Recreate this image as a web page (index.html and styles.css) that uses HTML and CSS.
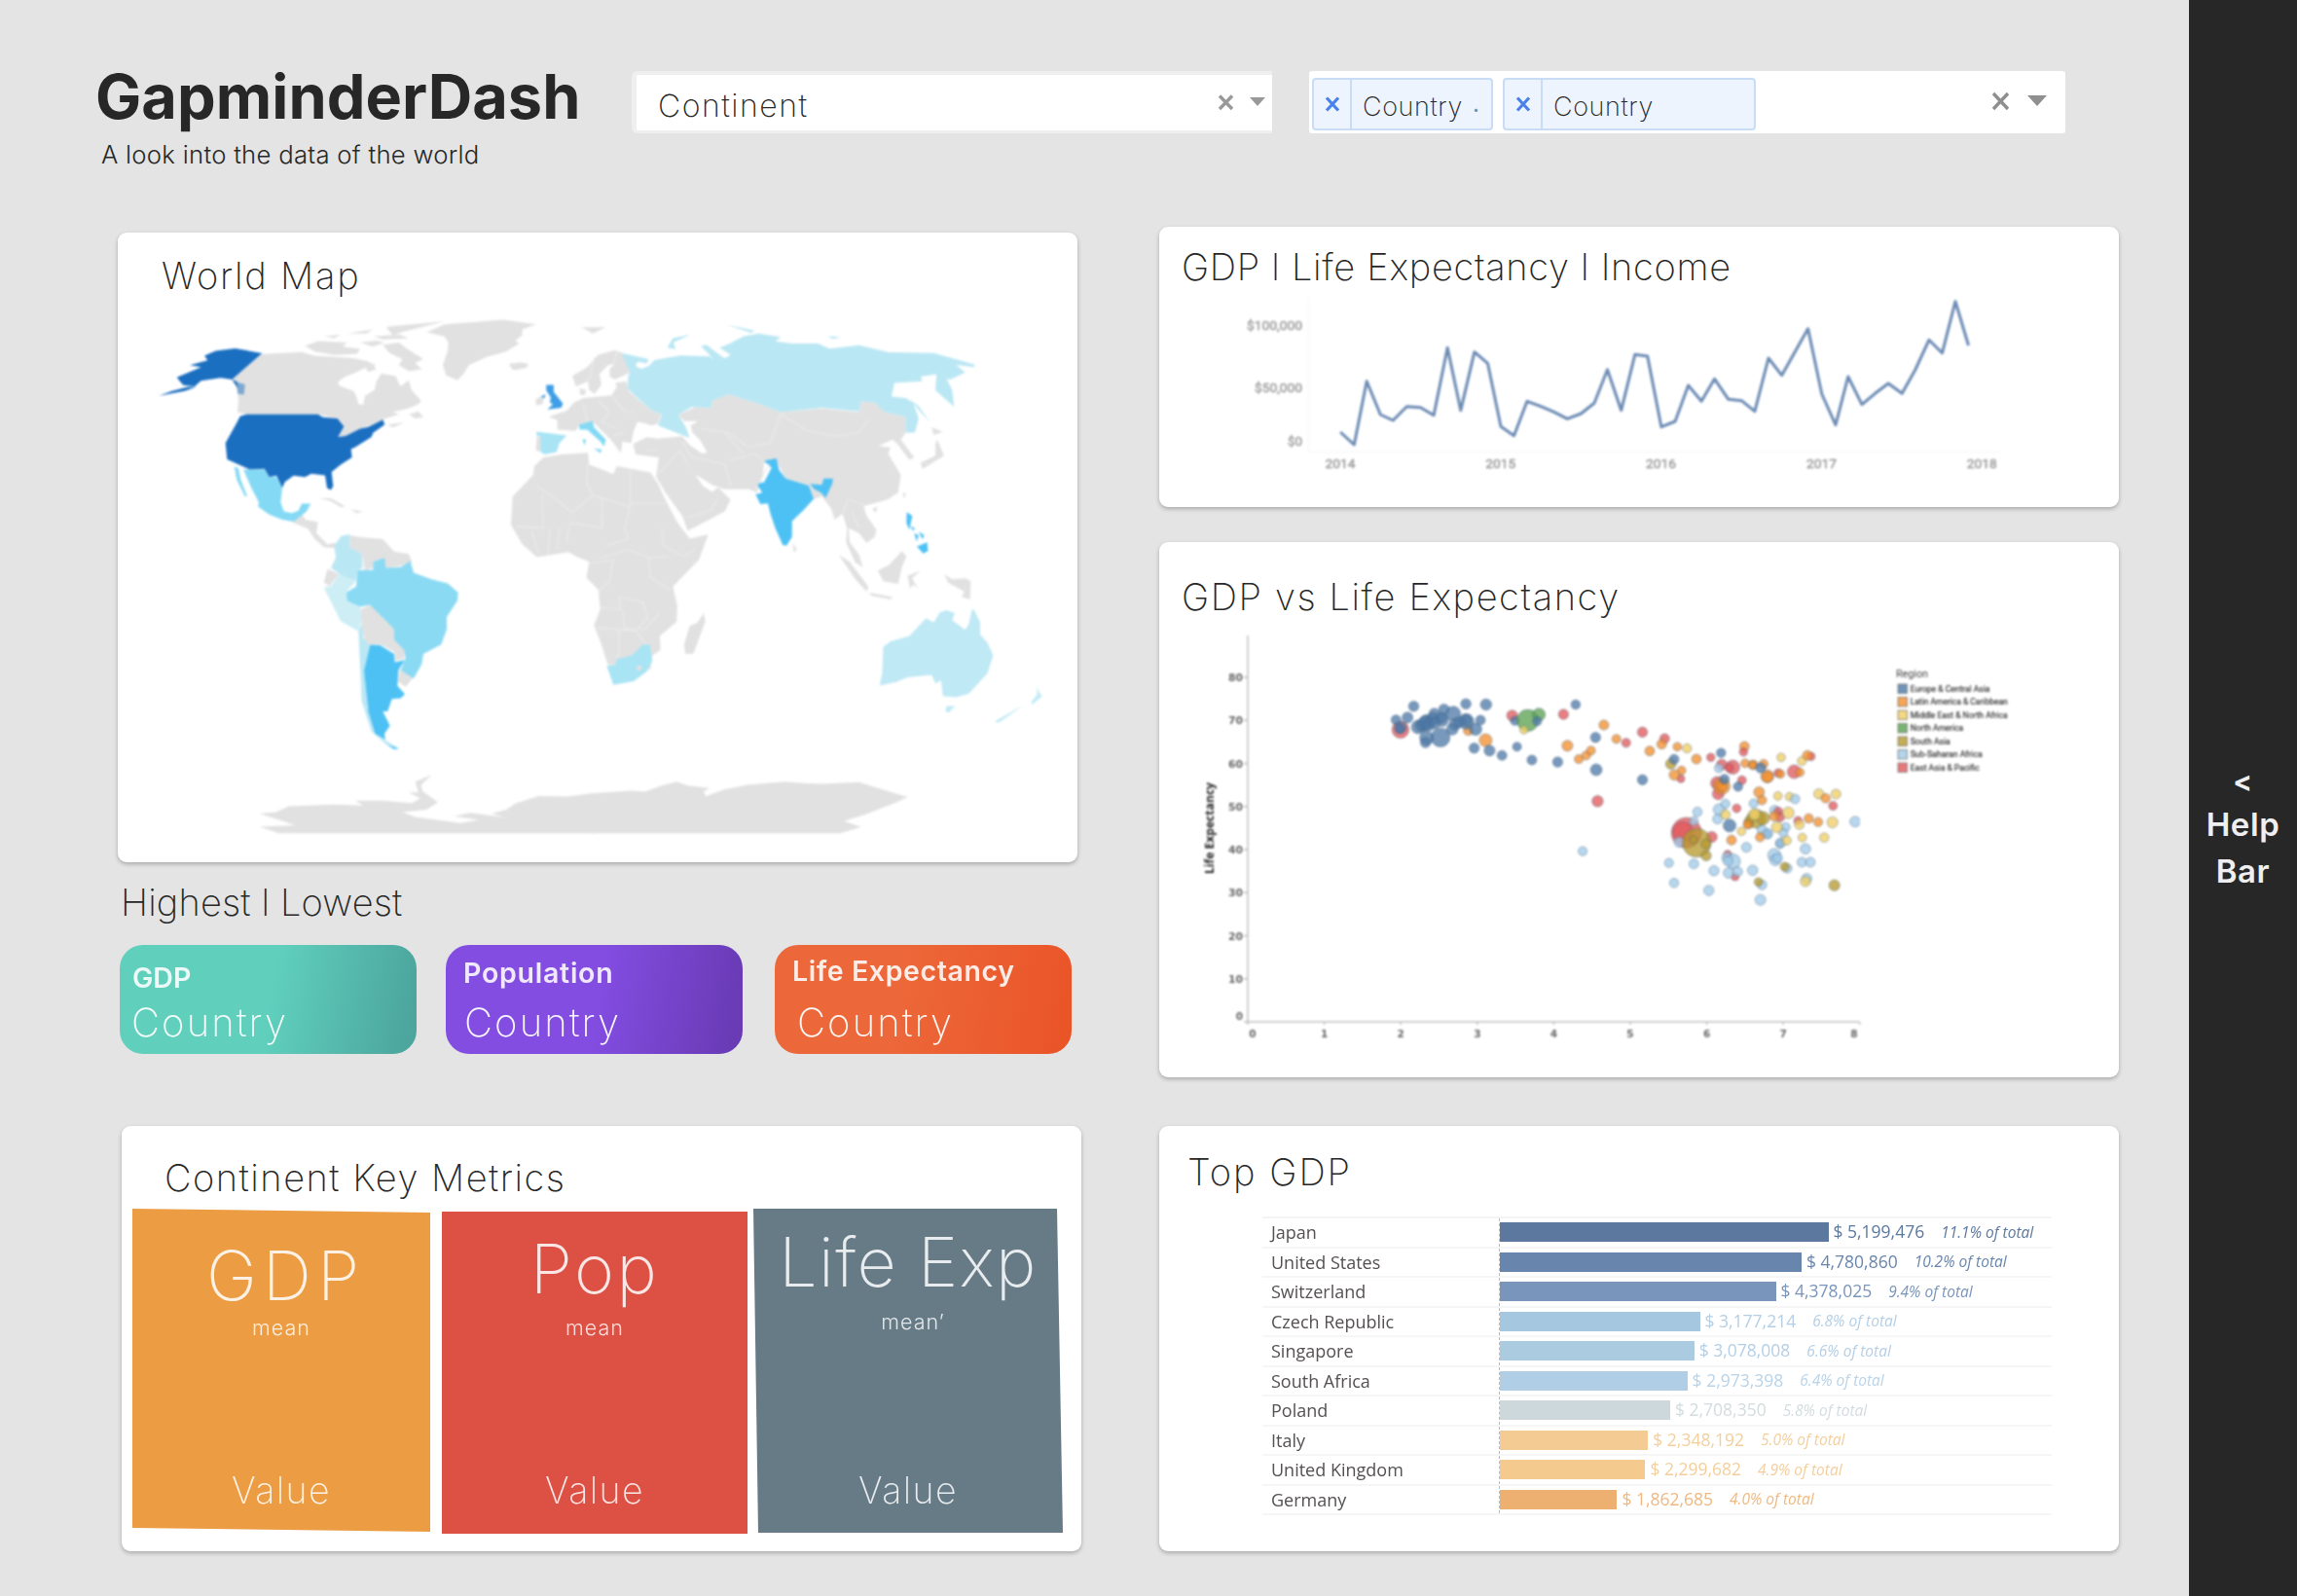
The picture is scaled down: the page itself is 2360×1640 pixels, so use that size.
FILE: index.html
```html
<!DOCTYPE html>
<html lang="en">
<head>
<meta charset="utf-8">
<title>GapminderDash</title>
<link rel="stylesheet" href="styles.css">
</head>
<body>
<div class="app">
<main class="main">
  <header class="header">
    <div class="brand">
      <h1 class="brand-name">GapminderDash</h1>
      <p class="brand-sub">A look into the data of the world</p>
    </div>
    <div class="select select-one">
      <span class="select-value">Continent</span>
      <svg class="controls-one" width="52" height="20" viewBox="0 0 52 20"><path d="M4 3.500 17 17M17 3.500 4 17" stroke="#999" stroke-width="3.400"/><path d="M35 5h16l-8 9z" fill="#999"/></svg>
    </div>
    <div class="select select-multi">
      <div class="tag tag-a"><span class="tag-x"><svg width="16" height="16" viewBox="0 0 16 16"><path d="M2 1.500 14 14.500M14 1.500 2 14.500" stroke="#4a80ea" stroke-width="3.200"/></svg></span><span class="tag-label">Country</span><span class="tag-dot">.</span></div>
      <div class="tag tag-b"><span class="tag-x"><svg width="16" height="16" viewBox="0 0 16 16"><path d="M2 1.500 14 14.500M14 1.500 2 14.500" stroke="#4a80ea" stroke-width="3.200"/></svg></span><span class="tag-label">Country</span></div>
      <svg class="controls-multi" width="60" height="22" viewBox="0 0 60 22"><path d="M2 3 17 19M17 3 2 19" stroke="#8f8f8f" stroke-width="3.400"/><path d="M37 5h20L47 16z" fill="#8f8f8f"/></svg>
    </div>
  </header>

  <div class="columns">
    <div class="col col-left">
      <section class="card card-map">
        <h2 class="title t-map">World Map</h2>
        <svg class="map" viewBox="121 310 986 576" width="986" height="576">
          <g class="land" transform="translate(110 230) scale(.33333 .42092)">
            <path d="M478 318 560 315 600 313 640 322 700 325 760 328 800 335 830 345 800 350 770 362 730 375 712 386 715 395 760 408 768 420 775 440 790 442 795 420 825 405 830 385 845 365 890 372 897 385 905 397 930 382 938 405 968 432 960 440 930 450 880 460 900 465 870 472 850 478 815 490 780 500 735 518 712 520 728 495 710 475 650 465 430 465 402 460 405 430 400 400 385 380z"/>
            <path d="M610 298 650 286 740 290 725 300 780 305 770 318 700 320 640 312zM670 275 720 270 700 280zM740 268 820 258 800 268zM780 290 830 285 855 290 820 300zM850 295 900 290 925 305 975 330 950 340 970 355 930 360 900 345 910 330 870 315zM860 252 900 248 1040 238 980 250 920 262 880 272zM820 275 900 270 930 280 850 282zM795 350 820 345 830 355 805 362zM930 465 960 458 975 472 950 475zM865 490 915 485 880 498z"/>
            <path d="M985 265 1040 245 1130 240 1220 234 1322 245 1280 258 1280 272 1258 285 1270 292 1230 312 1170 325 1115 345 1100 365 1080 382 1045 370 1035 345 1050 310 1052 290 1040 275zM1240 343 1270 338 1298 342 1290 352 1250 357z"/>
            <path d="M570 728 600 708 612 722 650 728 645 755 680 783 700 778 708 792 670 790 640 770 620 745zM655 670 690 670 735 690 720 692 690 677zM750 697 790 702 770 707z"/>
            <path d="M748 760 780 765 850 770 885 800 930 806 940 825 905 835 862 840 852 815 820 825 820 840 795 847 785 805 748 790zM680 842 715 855 685 885 668 875z"/>
            <path d="M782 940 812 930 858 963 887 990 890 1015 918 1040 915 1062 890 1067 885 1045 840 1026 800 1030 785 990zM902 1088 943 1108 920 1130 897 1118z"/>
            <path class="flat" d="M470 1440 520 1436 560 1422 700 1418 790 1420 765 1408 850 1408 940 1414 965 1402 930 1388 960 1388 950 1362 1000 1345 968 1370 972 1385 1020 1412 985 1430 910 1436 950 1448 1090 1463 1145 1455 1070 1446 1120 1438 1230 1450 1185 1440 1230 1430 1260 1415 1330 1397 1420 1398 1500 1390 1500 1488 530 1488 470 1472 580 1468 530 1455z"/>
            <path class="us" d="M478 316 395 304 335 310 300 322 310 333 255 345 290 350 215 375 225 385 235 394 270 397 290 383 350 376 385 380zM160 420 200 408 250 398 275 398 240 408zM385 380 400 385 404 402z"/>
            <path class="us soft" d="M398 386 425 392 422 417 403 415z"/>
            <path class="us" d="M430 465 650 465 665 472 710 475 730 495 712 520 735 518 780 500 805 496 850 478 856 490 820 510 815 520 765 545 752 550 755 570 720 588 692 606 697 640 690 650 678 645 672 614 630 610 610 618 575 615 548 630 540 645 522 615 500 618 485 598 440 600 370 575 365 535 400 485 410 470z"/>
            <path class="mx" d="M420 600 485 600 500 618 522 618 540 645 535 680 545 702 570 706 590 700 600 683 628 683 615 702 575 727 540 722 500 710 465 690 468 680 445 645zM392 592 405 597 412 625 432 665 425 665 400 625z"/>
            <path class="c2" d="M700 785 722 762 748 758 748 790 785 805 788 840 772 845 768 870 735 865 690 840 705 815z"/>
            <path class="c1" d="M715 855 768 872 740 895 745 920 780 935 785 965 775 995 720 970 668 888 690 885z"/>
            <path class="br" d="M772 845 820 845 820 825 855 815 860 840 905 838 935 823 945 852 1000 868 1050 878 1082 900 1080 920 1047 960 1047 990 1030 1027 975 1050 970 1075 945 1110 905 1090 920 1060 915 1040 885 1015 885 990 855 965 810 930 780 935 740 920 738 900 768 885z"/>
            <path class="c2" d="M775 995 785 975 790 1010 808 1030 793 1085 802 1180 822 1245 860 1262 900 1280 870 1277 815 1240 785 1165z"/>
            <path class="c4" d="M810 1028 840 1028 885 1050 887 1070 918 1065 898 1090 895 1128 918 1148 905 1158 878 1160 865 1190 850 1190 872 1225 855 1245 858 1260 825 1245 805 1190 792 1090zM865 1273 900 1281 885 1283z"/>
          </g>
          <g class="land" transform="translate(500 310) scale(.38265 .36352)">
            <path class="flat" d="M280 1390 390 1382 425 1385 470 1368 510 1357 540 1368 598 1375 583 1385 588 1398 640 1378 700 1366 800 1357 850 1361 900 1363 1000 1358 1050 1375 1130 1400 1100 1415 1020 1448 960 1468 1005 1485 950 1503 280 1503z"/>
            <path d="M135 382 148 382 145 425 132 420zM255 72 320 72 285 90zM60 175 105 173 112 182 78 193zM132 275 155 265 150 290 132 293z"/>
            <path d="M166 325 215 308 235 285 260 272 335 265 350 240 345 230 375 225 380 250 405 275 440 305 468 320 460 345 440 350 430 345 405 340 395 365 388 400 365 395 360 428 335 392 285 340 247 348 240 365 190 362 190 335zM230 210 270 185 300 150 345 137 365 145 385 200 345 220 330 212 330 190 345 175 325 180 303 205 308 235 290 260 275 250 272 225 240 240zM250 245 268 250 262 265 250 262z"/>
            <path d="M515 320 560 298 605 300 605 280 650 262 735 290 790 312 900 302 1000 312 1005 282 1040 285 1070 312 1125 325 1125 370 1112 390 1148 440 1135 447 1105 405 1090 390 1052 408 1085 412 1078 430 1112 490 1105 540 1075 560 1040 570 1012 578 1020 605 1047 645 1042 665 1020 682 1000 655 972 640 975 680 1000 715 1010 750 990 738 965 680 968 640 955 600 935 617 925 585 900 550 875 560 865 520 803 500 780 455 745 455 740 500 725 540 705 530 640 530 605 518 560 488 580 520 605 538 622 525 655 560 640 592 600 615 540 648 525 605 480 540 455 495 462 440 400 432 393 402 430 383 460 387 525 380 545 405 580 430 592 425 572 390 552 370 548 350 568 338 530 338z"/>
            <path d="M152 440 200 432 272 427 275 460 340 487 350 465 440 483 460 515 480 560 510 620 545 670 595 658 570 730 500 805 512 860 510 905 465 945 467 985 445 1000 440 1040 345 1030 325 1025 305 960 288 915 305 870 300 815 268 780 275 735 240 720 220 708 135 722 95 685 65 630 70 550 125 490 128 465z"/>
            <path d="M583 880 587 905 555 995 533 995 530 970 545 917 565 908zM822 682 833 700 825 710zM1195 355 1225 368 1200 377zM1210 390 1228 435 1190 460 1170 473 1165 455 1205 435 1205 400zM1117 540 1126 542 1120 558zM1035 585 1050 580 1045 597zM1050 760 1080 745 1115 705 1127 720 1115 750 1105 798 1065 790zM945 715 975 735 1025 805 1020 820 990 785zM1025 822 1090 835 1085 842 1035 832zM1130 775 1165 760 1142 782 1158 810 1145 800 1137 812zM1228 770 1250 785 1285 782 1300 790 1298 842 1275 835 1283 820 1240 795z"/>
            <path class="uk" d="M160 235 180 235 180 255 205 288 200 300 163 305 178 290 170 285 172 270 160 250zM145 268 158 262 155 273z"/>
            <path class="c3" d="M135 367 215 378 195 400 188 425 155 432 145 425 145 382 133 378z"/>
            <path class="mx" d="M247 348 285 337 288 355 320 390 315 410 305 395 270 362 250 362zM288 415 310 418 305 428zM257 388 267 390 263 407z"/>
            <path class="c2" d="M362 145 435 162 430 175 405 170 400 182 415 190 435 182 450 165 520 152 600 155 612 165 575 125 590 122 625 150 640 160 655 150 625 130 650 120 690 98 730 90 790 100 775 112 820 118 890 118 920 133 1000 123 1080 143 1200 145 1312 178 1308 185 1260 178 1285 200 1245 220 1235 218 1250 250 1255 297 1205 250 1208 205 1165 212 1170 225 1095 230 1087 268 1125 272 1145 285 1160 330 1150 370 1125 370 1125 325 1070 312 1040 285 1005 282 1000 310 900 300 790 312 735 290 650 262 605 280 605 300 550 298 515 320 535 355 545 385 460 350 470 320 440 305 405 272 378 245 380 210 385 200zM485 130 500 103 548 93 502 115 507 135zM645 65 720 82 710 88zM915 98 950 100 930 106zM1140 280 1160 295 1190 340 1165 312z"/>
            <path class="c4" d="M745 450 778 443 785 475 803 500 865 520 878 558 850 590 820 620 820 665 805 690 795 688 775 640 762 600 755 570 735 572 722 545 740 540 725 515 745 510 765 470zM868 515 900 518 905 500 930 500 928 515 910 555 898 540 880 530zM1128 595 1143 605 1135 645 1127 625zM1138 635 1150 640 1145 648zM1148 655 1160 660 1155 678zM1160 650 1175 660 1170 672zM1155 692 1183 680 1185 705 1172 712z"/>
            <path class="c3" d="M322 1028 345 1028 350 1010 390 1000 420 968 438 970 445 1015 430 1045 395 1073 340 1083z"/>
            <path d="M400 1035 410 1026 419 1034 408 1045z"/>
            <path class="au" d="M1065 975 1085 960 1135 945 1180 895 1200 907 1217 878 1235 872 1257 880 1250 900 1285 928 1295 910 1303 870 1308 870 1325 905 1325 940 1345 965 1360 1000 1345 1050 1295 1108 1260 1118 1225 1115 1220 1070 1205 1080 1195 1055 1130 1062 1100 1075 1055 1085 1062 1050zM1235 1143 1258 1143 1240 1162 1232 1158zM1478 1088 1485 1108 1492 1115 1465 1138 1462 1132 1478 1112zM1442 1140 1375 1190 1363 1187z"/>
            <path class="borders" d="M135 520 230 595 285 548 385 580M272 460 268 510 285 548M385 475 385 580 370 640 380 670 320 690M150 545 152 640 80 635M310 555 310 640 225 625 215 680M385 570 480 570M470 640 475 690 530 720 560 700M305 725 380 700 440 725 490 720M275 740 340 730 330 790 300 820M435 725 440 780 495 815M305 865 360 870 355 835 420 850 435 900M365 870 370 925 425 925 465 880M295 922 400 930 430 895M355 930 355 990 350 1010M400 930 430 970M463 485 520 420 545 470M540 610 600 590 620 560M525 395 550 440 640 460 655 520M650 450 720 430 745 450M575 360 650 370 700 410 760 400 790 318 860 365 940 380 1000 370 1030 330M640 370 690 430M720 530 760 460M955 600 970 560 1015 575M980 590 1000 640M260 290 270 340M300 280 330 310 310 340 350 360M335 265 370 310 400 310M430 420 460 420M340 380 370 370M120 650 140 710M170 640 165 715M195 640 190 700M290 155 275 220M350 140 340 180"/>
          </g>
        </svg>
      </section>

      <h2 class="title t-high">Highest l Lowest</h2>
      <div class="tiles">
        <div class="tile tile-gdp"><span class="tile-name">GDP</span><span class="tile-country">Country</span></div>
        <div class="tile tile-pop"><span class="tile-name">Population</span><span class="tile-country">Country</span></div>
        <div class="tile tile-life"><span class="tile-name">Life Expectancy</span><span class="tile-country">Country</span></div>
      </div>

      <section class="card card-metrics">
        <h2 class="title t-metrics">Continent Key Metrics</h2>
        <div class="metrics">
          <div class="metric m-gdp"><span class="m-name">GDP</span><span class="m-mean">mean</span><span class="m-value">Value</span></div>
          <div class="metric m-pop"><span class="m-name">Pop</span><span class="m-mean">mean</span><span class="m-value">Value</span></div>
          <div class="metric m-life"><span class="m-name">Life Exp</span><span class="m-mean">mean’</span><span class="m-value">Value</span></div>
        </div>
      </section>
    </div>

    <div class="col col-right">
      <section class="card card-line">
        <h2 class="title t-line">GDP l Life Expectancy l Income</h2>
        <svg class="chart" id="line" viewBox="1191 300 986 221" width="986" height="221"></svg>
      </section>
      <section class="card card-scatter">
        <h2 class="title t-scatter">GDP vs Life Expectancy</h2>
        <svg class="chart" id="scatter" viewBox="1191 640 986 467" width="986" height="467"></svg>
      </section>
      <section class="card card-top">
        <h2 class="title t-top">Top GDP</h2>
        <div class="bars" id="bars"></div>
      </section>
    </div>
  </div>
</main>
<aside class="help"><span class="help-arrow">&lt;</span><span>Help</span><span>Bar</span></aside>
</div>
<script src="script.js"></script>
</body>
</html>
```
FILE: styles.css
```css
* { box-sizing: border-box; margin: 0; padding: 0; }
body { font-family: Inter, "Liberation Sans", sans-serif; color: #272727; background: #e4e4e4; }
.app { display: flex; width: 2360px; height: 1640px; overflow: hidden; }
.main { width: 2249px; background: #e4e4e4; }
.help { width: 111px; background: #272727; color: #efeff1; display: flex; flex-direction: column; align-items: center; padding-top: 782px; font-size: 33px; font-weight: 600; line-height: 48px; letter-spacing: .6px; }
.help-arrow { font-size: 29px; font-weight: 700; line-height: 41px; }

.header { display: flex; height: 233px; padding: 73px 0 0 98px; align-items: flex-start; }
.brand { width: 551px; }
.brand-name { font-size: 63px; line-height: 63px; font-weight: 700; letter-spacing: .05px; margin-top: -5px; white-space: nowrap; }
.brand-sub { font-size: 25.7px; line-height: 26px; font-weight: 300; letter-spacing: .28px; margin: 15px 0 0 6px; white-space: nowrap; }
.select { display: flex; align-items: center; background: #fff; }
.select-one { width: 658px; height: 64px; border: solid #efefef; border-width: 4px 0 3px 5px; border-radius: 6px 0 0 6px; padding: 7px 6px 0 22px; justify-content: space-between; }
.select-value { font-size: 32px; line-height: 32px; font-weight: 250; letter-spacing: 1.500px; }
.controls-one { margin-top: -9px; }
.select-multi { width: 777px; height: 64px; margin-left: 38px; border-radius: 3px; padding: 0 16px 0 3px; gap: 10px; }
.tag { display: flex; height: 54px; border: 2px solid #c9dcf5; border-radius: 4px; background: #edf4fe; margin-top: 3px; }
.tag-x { display: flex; width: 39px; border-right: 2px solid #c9dcf5; align-items: center; justify-content: center; }
.tag-label { font-size: 27px; line-height: 27px; font-weight: 250; letter-spacing: .6px; margin: 14px 0 0 11px; }
.tag-dot { font-size: 24px; line-height: 27px; margin: 11px 0 0 10px; color: #6a90b8; }
.tag-a { width: 186px; }
.tag-b { width: 260px; }
.controls-multi { margin: -2px 0 0 auto; }

.columns { display: flex; }
.col { display: flex; flex-direction: column; }
.col-left { padding: 6px 0 0 121px; width: 1191px; }
.card { width: 986px; background: #fff; border-radius: 9px; box-shadow: 0 2px 4px rgba(0,0,0,.26); overflow: hidden; }
.title { font-size: 38px; line-height: 38px; font-weight: 230; white-space: nowrap; }
.chart, .map { display: block; }

.card-map { height: 647px; }
.t-map { height: 71px; padding: 25px 0 0 45px; letter-spacing: 1.800px; }
.map { filter: blur(.9px); }
.land path { fill: #e1e1e1; }
.land .us { fill: #1b6fc1; }
.land .soft { opacity: .5; }
.land .mx { fill: #84d9f4; }
.land .br { fill: #8bdaf3; }
.land .c1 { fill: #cdeef5; }
.land .c2 { fill: #bae7f4; }
.land .c3 { fill: #a8e4f4; }
.land .c4 { fill: #4ec1f4; }
.land .uk { fill: #3f9ee6; }
.land .au { fill: #bfe9f5; }
.land .borders { fill: none; stroke: #ececec; stroke-width: 3; }

.t-high { margin: 22px 0 0 3px; height: 63px; letter-spacing: .15px; }
.tiles { display: flex; padding-left: 2px; }
.tile { width: 305px; height: 112px; border-radius: 24px; color: #fff; display: flex; flex-direction: column; }
.tile-name { font-size: 28.500px; line-height: 29px; font-weight: 600; opacity: .88; white-space: nowrap; }
.tile-country { font-size: 40px; line-height: 40px; font-weight: 200; opacity: .95; letter-spacing: 2.100px; }
.tile-gdp { background: linear-gradient(100deg, #60d0bd 50%, #4ca69e 96%); padding: 19px 0 0 13px; }
.tile-gdp .tile-country { margin: 12px 0 0 -1px; }
.tile-pop { margin: 0 33px 0 30px; background: linear-gradient(100deg, #834de2 50%, #693bb5 96%); padding: 14px 0 0 18px; }
.tile-pop .tile-name { letter-spacing: .75px; }
.tile-pop .tile-country { margin: 17px 0 0 1px; }
.tile-life { background: linear-gradient(100deg, #ec683a 40%, #ea5528 96%); padding: 12px 0 0 18px; }
.tile-life .tile-name { letter-spacing: .6px; }
.tile-life .tile-country { margin: 19px 0 0 5px; }

.card-metrics { margin: 74px 0 0 4px; height: 437px; }
.t-metrics { height: 84px; padding: 34px 0 0 44px; letter-spacing: 1.500px; }
.metrics { display: flex; padding-left: 11px; }
.metric { display: flex; flex-direction: column; align-items: center; height: 336px; color: #fff; }
.m-name { font-size: 70px; line-height: 69px; font-weight: 200; opacity: .86; white-space: nowrap; }
.m-mean { font-size: 21.500px; line-height: 22px; font-weight: 300; opacity: .82; letter-spacing: 1px; }
.m-value { font-size: 37.500px; line-height: 38px; font-weight: 200; opacity: .86; letter-spacing: 1.400px; margin: auto 0 26px; }
.m-gdp { width: 306px; margin-right: 12px; padding-top: 35px; background: #ec9d43; clip-path: polygon(0 1px, 100% 5px, 100% 333px, 0 329px); }
.m-gdp .m-name { letter-spacing: 6px; padding-left: 9px; }
.m-gdp .m-mean { margin-top: 8px; }
.m-pop { width: 314px; margin-right: 6px; padding-top: 28px; background: #dd5044; clip-path: polygon(0 4px, 100% 4px, 100% 335px, 0 335px); }
.m-pop .m-name { letter-spacing: 2.500px; }
.m-pop .m-mean { margin-top: 15px; }
.m-life { width: 318px; padding-top: 21px; background: #677b87; clip-path: polygon(0 1px, 312px 1px, 318px 334px, 5px 334px); }
.m-life .m-name { letter-spacing: 1.300px; }
.m-life .m-mean { margin: 16px 0 0 10px; }

.card-line { height: 288px; }
.t-line { height: 67px; padding: 22px 0 0 23px; letter-spacing: .7px; }
.card-scatter { height: 550px; margin-top: 36px; }
.t-scatter { height: 83px; padding: 37px 0 0 23px; letter-spacing: 1.600px; }
.card-top { height: 437px; margin-top: 50px; }
.t-top { height: 93px; padding: 28px 0 0 29px; letter-spacing: 2px; }
.chart { filter: blur(.8px); }
.ser-line { fill: none; stroke: #6c8bb4; stroke-width: 3; stroke-linejoin: round; }
.money { font: 13.500px Roboto, sans-serif; fill: #999; stroke: #999; stroke-width: .4; }
.axis { stroke: #c0c0c0; stroke-width: 1.500; fill: none; }
.tick { font: bold 10.500px "DejaVu Sans", sans-serif; fill: #666; }
.ylab { font: bold 12px "Open Sans", sans-serif; fill: #222; }
.leg-title { font: 10.500px Roboto, sans-serif; fill: #444; }
.leg { font: 8.600px Roboto, sans-serif; fill: #333; stroke: #333; stroke-width: .2; }

.bars { width: 811px; margin-left: 106px; border-top: 2px solid #f4f4f4; filter: blur(.3px); }
.bar-row { display: flex; height: 30.500px; align-items: center; border-bottom: 2px solid #f6f6f6; font-family: "Open Sans", sans-serif; font-size: 17.500px; white-space: nowrap; }
.bar-label { width: 244px; padding-left: 9px; color: #555051; font-weight: 500; font-size: 18px; height: 100%; line-height: 29px; border-right: 1px dashed #bbb; }
.bar { height: 20px; margin-right: 5px; }
.bar-value { font-weight: 500; line-height: 26px; margin-bottom: 2px; }
.bar-pct { font-style: italic; font-size: 15.500px; margin-left: 17px; line-height: 26px; margin-bottom: 1px; }
```
FILE: script.js
```js
const esc = s => s.replace(/&/g, '&amp;');
const label = (cls, x, y, s, anchor, len) =>
  `<text class="${cls}" x="${x}" y="${y}" text-anchor="${anchor || 'start'}"${len ? ` textLength="${len}" lengthAdjust="spacingAndGlyphs"` : ''}>${esc(s)}</text>`;

// Time series
const series = [[306,672],[328,711],[348,515],[370,618],[390,636],[412,593],[434,596],[455,620],[477,412],[498,605],[520,425],[541,460],[562,655],[583,683],[604,577],[626,593],[647,610],[668,631],[690,615],[711,583],[732,479],[754,605],[776,433],[796,438],[818,656],[840,639],[861,528],[882,577],[903,508],[925,571],[946,575],[967,608],[989,444],[1010,497],[1031,425],[1052,353],[1074,555],[1096,650],[1116,501],[1138,587],[1159,553],[1180,522],[1202,553],[1223,480],[1245,388],[1266,428],[1287,269],[1308,405]];
let out = `<path d="M1344 305V464H2055" fill="none" stroke="#f5f5f7"/>`;
out += `<polyline class="ser-line" points="${series.map(([x, y]) => (1180 + x / 1.5525).toFixed(1) + ',' + (220 + y / 3).toFixed(1)).join(' ')}"/>`;
out += label('money', 1338, 339, '$100,000', 'end', 57) + label('money', 1338, 403, '$50,000', 'end', 49) + label('money', 1338, 458, '$0', 'end', 15);
['2014', '2015', '2016', '2017', '2018'].forEach((y, i) => { out += label('money', 1377 + i * 164.8, 481, y, 'middle', 31); });
document.getElementById('line').innerHTML = out;

// Scatter plot
const col = { b: '#4e79a7', o: '#f28e2b', y: '#f1ce63', g: '#59a14f', k: '#b6992d', s: '#a0cbe8', r: '#e15759' };
const left = [
['r',165,209,8.8],['b',203,137,5.3],['b',152,179,5],['b',185,172,5.6],['b',165,203,6],['b',162,208,4.6],['b',216,201,7],['b',226,196,6.5],['b',240,184,7],['b',236,190,7.5],['b',262,160,5.5],['b',258,176,6.5],['b',246,194,6.5],['b',290,147,5.5],['b',285,180,6.5],['b',282,172,5.5],['b',317,160,7.5],['b',322,193,6],['b',314,208,6],['b',280,233,9.8],['b',240,235,7],['b',237,249,5.3],['b',264,190,5.5],['b',353,130,5.3],['b',411,132,5.8],['o',360,212,5],['b',354,184,8],['b',354,180,5.8],['b',335,186,5.5],['b',381,208,6.3],['b',395,180,5],['b',377,266,5.2],['o',410,242,6.6],['b',421,274,5.6],['b',457,289,5],['b',500,262,4.6],['b',543,303,5],['b',617,309,5.2],['b',728,333,6],['b',726,233,5.2],['b',669,132,4.8],['b',861,364,5.2],
['r',486,166,5.6],['b',494,182,4.6],['g',531,181,11.2],['g',563,163,6.6],['b',558,183,4.7],['y',520,210,4.3],['r',634,162,5.2],['o',645,259,5.6],['o',678,300,4.6],['o',699,289,4.6],['o',713,274,4.6],['o',750,195,5.1],['o',786,238,4.6],['r',814,250,4.6],['r',861,217,5.2],['o',882,275,5],['r',732,430,5.8],['s',689,584,4.6]];
const right = [
['r',61,57,5],['o',52,74,5],['o',100,82,4.4],['y',130,87,4.7],['o',159,120,5],['k',80,135,5.4],['b',90,121,5],['o',113,155,4.4],['r',111,181,4],['o',91,169,5.4],['r',203,115,4.3],['b',235,101,4.8],['o',307,81,5],['r',304,98,4.3],['y',420,115,4.4],['r',237,137,5.5],['r',271,145,7.2],['r',260,147,4.6],['s',228,148,4.6],['o',309,133,4.4],['o',334,138,5],['o',332,138,4],['o',366,135,4.6],['o',377,173,6.8],['o',379,175,5.4],['b',357,147,5.2],['r',411,163,4.4],['o',418,166,4.4],['r',460,159,6.9],['o',478,161,4.4],['y',484,126,4.6],['r',512,112,4.3],['o',501,109,5],
['r',223,194,6.7],['r',226,227,6],['o',237,203,8.6],['o',237,203,5.6],['b',245,182,5],['r',299,185,4.5],['b',287,205,4.8],['o',352,222,5.5],['o',361,247,4.7],['y',410,234,4.4],['y',446,236,4.4],['s',463,243,4.8],['y',536,227,5.2],['o',557,241,4.8],['y',589,228,5],['r',580,264,4.5],['r',283,272,4.4],
['s',162,283,4.8],['s',229,276,6],['s',248,258,4.6],['s',224,305,5],['y',248,291,4.9],['b',261,325,6.6],['s',335,257,4.6],['s',400,278,5],['o',320,318,5.4],['k',343,304,9.6],['k',364,302,6.8],['k',322,308,4.5],['y',338,291,6],['o',317,322,4.5],['r',411,281,4.4],['r',416,299,4.8],['o',399,296,5],['y',442,286,6],['y',298,343,4.3],['s',361,338,5],['b',378,351,4.5],['s',378,350,5.3],['s',434,330,4.6],['s',427,348,4.5],['y',407,330,5.6],['o',355,361,4.7],['o',267,370,5],['r',472,310,4.3],['y',476,322,5],['o',505,303,4.8],['o',534,314,4.7],['y',578,315,5.6],['s',648,313,5.4],['y',485,362,4.4],['y',553,362,4.8],['b',417,380,4.7],['s',418,379,5],['y',437,371,4.7],['s',313,392,5],['s',495,397,5.3],
['r',128,347,15.6],['r',117,344,10.4],['r',206,360,5.6],['s',151,311,4.5],['s',106,376,5.3],['k',160,378,14.8],['k',150,369,4],['k',189,418,5.2],['k',188,382,5],['s',74,440,4.6],['s',151,443,4.9],['s',213,464,5.2],['s',90,502,4.7],['s',197,525,5.2],['r',255,414,4.3],['s',254,424,5.6],['s',272,435,7.4],['s',256,434,5],['r',278,483,4],['s',258,471,5.4],['s',286,467,5],['s',332,463,5.3],['s',399,416,6.7],['s',402,431,5.7],['s',409,425,5],['s',439,457,4.8],['k',431,452,4.6],['s',484,438,4.9],['s',510,438,5],['s',361,508,4.9],['k',350,499,4.4],['s',356,554,5.5],['s',499,488,5.2],['y',495,497,5.3],['k',584,509,5.6]];
const dots = (list, ox, oy, sx, sy) => list.map(([c, x, y, r]) => `<circle cx="${(ox + x / sx).toFixed(1)}" cy="${(oy + y / sy).toFixed(1)}" r="${r}" fill="${col[c]}" fill-opacity=".76" stroke="#46607c" stroke-opacity=".42"/>`).join('');
out = '<path class="axis" d="M1282 653V1053M1278 1050H1910"/>';
for (let i = 1; i <= 8; i++) {
  const y = 1050 - i * 44.25, x = 1282 + i * 78.6;
  out += `<path class="axis" d="M1278 ${y}h4M${x} 1050v3"/>` + label('tick', 1277, y + 4.2, String(i * 10), 'end', 15) + label('tick', i === 8 ? 1905 : x, 1066, String(i), 'middle');
}
out += label('tick', 1277, 1047.500, '0', 'end') + label('tick', 1287, 1066, '0', 'middle');
out += `<g transform="translate(1247 898) rotate(-90)">${label('ylab', 0, 0, 'Life Expectancy', 'start', 94)}</g>`;
out += '<clipPath id="plot"><path d="M1191 640h720v467h-720z"/></clipPath><g clip-path="url(#plot)">' + dots(left, 1380, 680, 2.8, 3) + dots(right, 1690, 740, 3, 3) + '</g>';
out += label('leg-title', 1948, 696, 'Region', 'start', 33);
[['b', 'Europe & Central Asia', 81.7], ['o', 'Latin America & Caribbean', 100], ['y', 'Middle East & North Africa', 100], ['g', 'North America', 54.500], ['k', 'South Asia', 41], ['s', 'Sub-Saharan Africa', 74], ['r', 'East Asia & Pacific', 71]].forEach(([c, s, w], i) => {
  const y = 707.700 + i * 13.500;
  out += `<rect x="1950" y="${y - 4.7}" width="9.400" height="9.400" fill="${col[c]}" fill-opacity=".8" stroke="#666" stroke-opacity=".7"/>` + label('leg', 1962.700, y + 3.1, s, 'start', w);
});
document.getElementById('scatter').innerHTML = out;

// Ranked bars
const rows = [['Japan', 337.5, '5,199,476', '11.1', '#5c789e', '#5c789e'], ['United States', 310, '4,780,860', '10.2', '#6886ad', '#6886ad'], ['Switzerland', 283.5, '4,378,025', '9.4', '#7995bb', '#7995bb'], ['Czech Republic', 205.5, '3,177,214', '6.8', '#a6c7e0', '#b4cfe5'], ['Singapore', 199.7, '3,078,008', '6.6', '#abcbe1', '#b4cfe5'], ['South Africa', 192.6, '2,973,398', '6.4', '#b0cee5', '#b9d3e8'], ['Poland', 175, '2,708,350', '5.8', '#cdd8dc', '#d2dcdf'], ['Italy', 152.3, '2,348,192', '5.0', '#f4cb92', '#f4cf9c'], ['United Kingdom', 149.4, '2,299,682', '4.9', '#f4ca8e', '#f4cf9c'], ['Germany', 120.4, '1,862,685', '4.0', '#eeb070', '#f0b87f']];
document.getElementById('bars').innerHTML = rows.map(([n, w, v, p, c, t]) =>
  `<div class="bar-row"><span class="bar-label">${n}</span><span class="bar" style="width:${w}px;background:${c}"></span><span class="bar-value" style="color:${t}">$ ${v}</span><span class="bar-pct" style="color:${t}">${p}% of total</span></div>`).join('');
```
